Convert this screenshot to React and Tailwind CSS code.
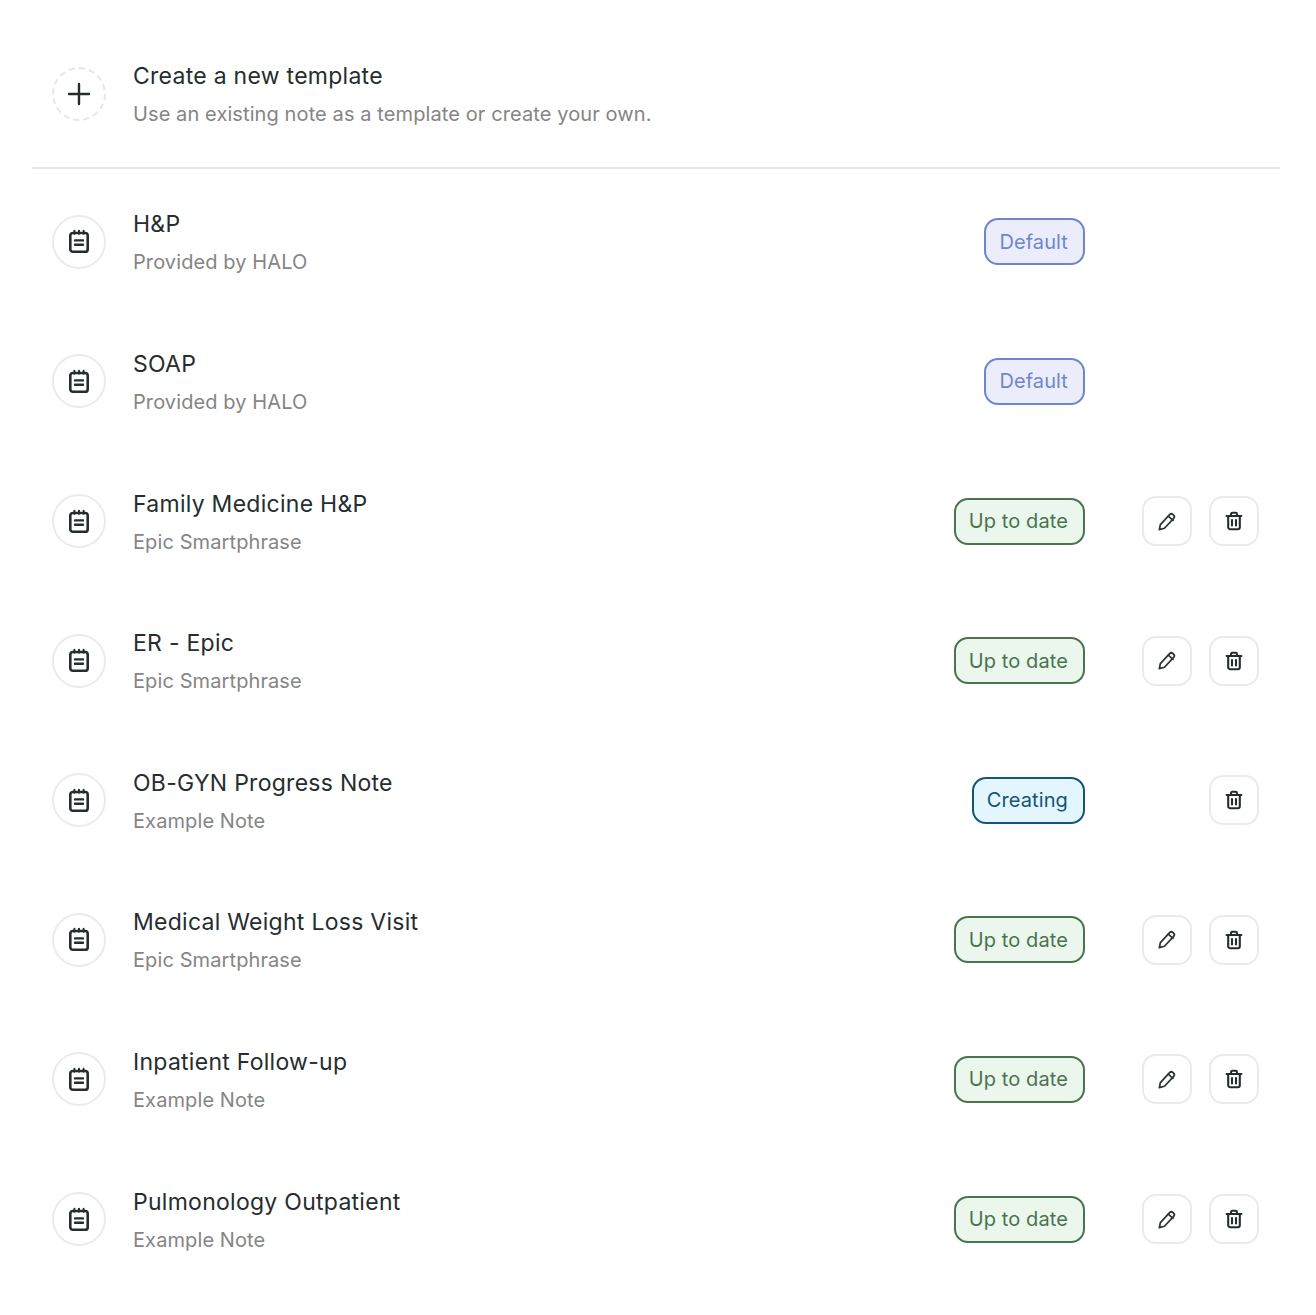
import React from "react";

const templates = [
  { name: "H&P", source: "Provided by HALO", status: "Default" },
  { name: "SOAP", source: "Provided by HALO", status: "Default" },
  { name: "Family Medicine H&P", source: "Epic Smartphrase", status: "Up to date", edit: true, remove: true },
  { name: "ER - Epic", source: "Epic Smartphrase", status: "Up to date", edit: true, remove: true },
  { name: "OB-GYN Progress Note", source: "Example Note", status: "Creating", remove: true },
  { name: "Medical Weight Loss Visit", source: "Epic Smartphrase", status: "Up to date", edit: true, remove: true },
  { name: "Inpatient Follow-up", source: "Example Note", status: "Up to date", edit: true, remove: true },
  { name: "Pulmonology Outpatient", source: "Example Note", status: "Up to date", edit: true, remove: true },
];

const badgeStyles = {
  Default: "bg-[#ebedfb] border-[#6f86cf] text-[#6f86cf]",
  "Up to date": "bg-[#ebf7ec] border-[#4a7350] text-[#4a7350]",
  Creating: "bg-[#e3f6fe] border-[#145478] text-[#145478]",
};

function NoteIcon() {
  return (
    <svg width="22" height="25" viewBox="0 0 22 25" fill="none" stroke="#262d2f" strokeWidth="2.6" strokeLinecap="round" strokeLinejoin="round">
      <rect x="2.3" y="4" width="17.4" height="18.8" rx="2.6" />
      <path d="M6.4 1.8v3M11 1.8v3M15.6 1.8v3" strokeWidth="2" />
      <path d="M7 11.4h8M7 15.8h8" strokeWidth="2.4" />
    </svg>
  );
}

function PencilIcon() {
  return (
    <svg width="21" height="21" viewBox="0 0 18 18" fill="none" stroke="#2d3436" strokeWidth="1.5" strokeLinecap="round" strokeLinejoin="round">
      <path d="M2 16l.9-4.3 7.9-8.6a2 2 0 0 1 2.8-.1l.6.5a2 2 0 0 1 .1 2.8l-7.9 8.5L2 16z" />
      <path d="M9.7 4.4l4 3.6" />
    </svg>
  );
}

function TrashIcon() {
  return (
    <svg width="18" height="20" viewBox="0 0 18 20" fill="none" stroke="#262d2f" strokeWidth="2.1" strokeLinecap="round" strokeLinejoin="round">
      <path d="M1.6 5h14.8" />
      <path d="M6 5V3.2A1.4 1.4 0 0 1 7.4 1.8h3.2A1.4 1.4 0 0 1 12 3.2V5" />
      <path d="M3.2 5v11.2a2 2 0 0 0 2 2h7.6a2 2 0 0 0 2-2V5" />
      <path d="M7 9v5.4M11 9v5.4" />
    </svg>
  );
}

function ActionButton({ children }) {
  return (
    <button className="w-[50px] h-[50px] flex items-center justify-center bg-white border-2 border-[#ebebeb] rounded-[14px]">
      {children}
    </button>
  );
}

function TemplateRow({ name, source, icon, dashed, status, edit, remove }) {
  return (
    <div className="h-[139.6px] flex items-center pl-5 pr-[21px]">
      <div className={`w-[54px] h-[54px] shrink-0 rounded-full flex items-center justify-center border-2 ${dashed ? "border-dashed border-[#e6e6e6]" : "border-[#ebebeb]"}`}>
        {icon}
      </div>
      <div className="ml-[27px] pt-[3px] flex flex-col gap-[8px]">
        <div className="text-[23px] leading-[30px] text-[#262d2f] tracking-[0.27px]">{name}</div>
        <div className="text-[20px] leading-[30px] text-[#858585] tracking-[0.1px]">{source}</div>
      </div>
      {status && (
        <div className={`ml-auto h-[47px] flex items-center pl-[13px] pr-[15px] border-2 rounded-[14px] text-[20px] tracking-[0.1px] ${badgeStyles[status]}`}>
          {status}
        </div>
      )}
      {status && (
        <div className="ml-[57px] flex gap-[17px]">
          <div className="w-[50px] h-[50px]">{edit && <ActionButton><PencilIcon /></ActionButton>}</div>
          <div className="w-[50px] h-[50px]">{remove && <ActionButton><TrashIcon /></ActionButton>}</div>
        </div>
      )}
    </div>
  );
}

export default function App() {
  return (
    <div className="min-h-[1315px] bg-white pl-8 pr-9 pt-[24px] font-['Inter',sans-serif]">
      <TemplateRow
        name="Create a new template"
        source="Use an existing note as a template or create your own."
        dashed
        icon={
          <svg width="26" height="26" viewBox="0 0 26 26" fill="none" stroke="#262d2f" strokeWidth="2.4" strokeLinecap="round">
            <path d="M13 3v20M3 13h20" />
          </svg>
        }
      />
      <div className="mt-[3px] mb-[3.5px] h-[2px] bg-[#e8e8e8]" />
      {templates.map((t) => (
        <TemplateRow key={t.name} {...t} icon={<NoteIcon />} />
      ))}
    </div>
  );
}
